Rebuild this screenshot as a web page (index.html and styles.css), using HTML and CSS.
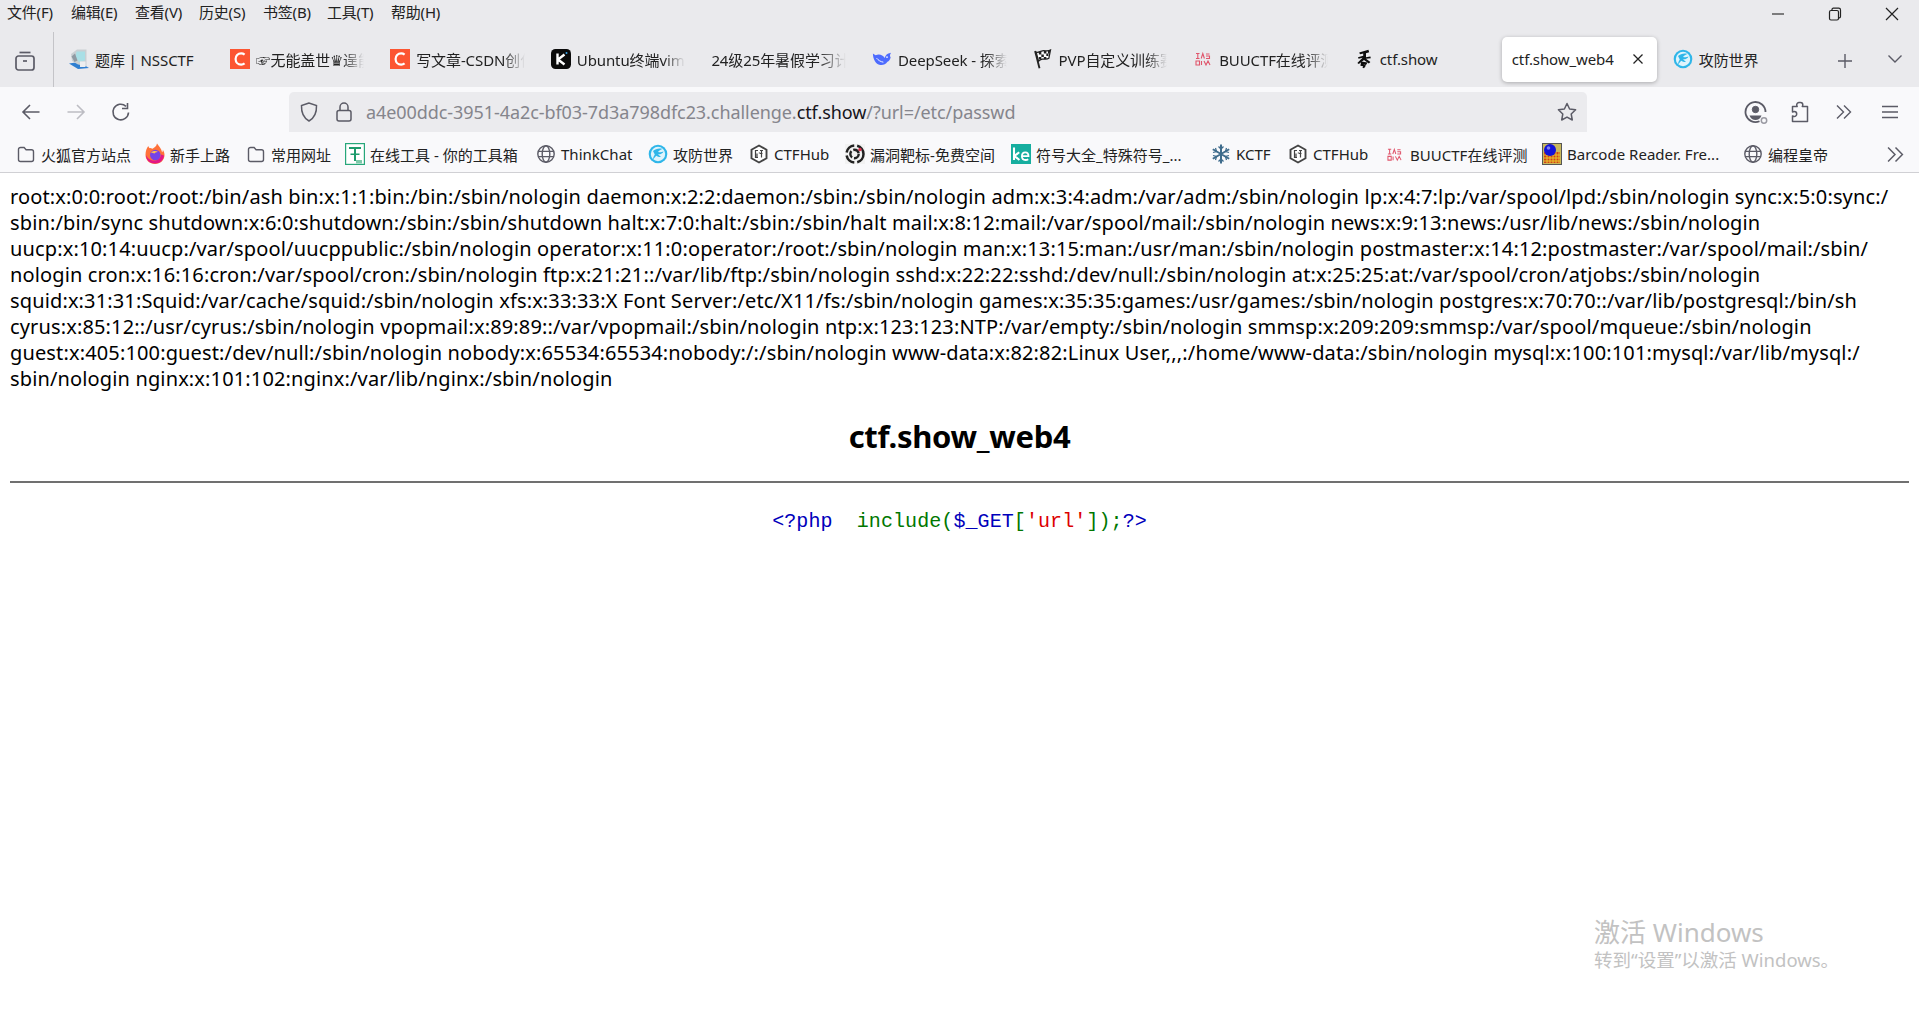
FILE: index.html
```html
<!DOCTYPE html>
<html lang="zh">
<head>
<meta charset="utf-8">
<title>ctf.show_web4</title>
<link rel="stylesheet" href="styles.css">
</head>
<body>
<svg class="defs" width="0" height="0" aria-hidden="true">
  <symbol id="i-folder" viewBox="0 0 20 20"><path d="M2.500 5.500a2 2 0 0 1 2-2h3.600l2 2.200h5.400a2 2 0 0 1 2 2v7.800a2 2 0 0 1-2 2h-11a2 2 0 0 1-2-2z" fill="none" stroke="#5b5b66" stroke-width="1.400"/></symbol>
  <symbol id="i-globe" viewBox="0 0 20 20"><g fill="none" stroke="#5b5b66" stroke-width="1.400"><circle cx="10" cy="10" r="8.200"/><ellipse cx="10" cy="10" rx="3.800" ry="8.200"/><path d="M2 7.400h16M2 12.600h16"/></g></symbol>
  <symbol id="i-csdn" viewBox="0 0 20 20"><rect width="20" height="20" fill="#fc5531"/><path d="M14.600 5.600A5.600 5.600 0 0 0 11.200 4.400C7.800 4.400 5.600 6.800 5.600 10s2.200 5.600 5.600 5.600a5.600 5.600 0 0 0 3.400-1.200" fill="none" stroke="#fff" stroke-width="2.200"/></symbol>
  <symbol id="i-k" viewBox="0 0 20 20"><rect width="20" height="20" rx="4.500" fill="#0b0b0b"/><path d="M6.500 4.500v11M13.500 5.500 7 10.500l6.500 5" fill="none" stroke="#fff" stroke-width="2.400"/><circle cx="15.500" cy="4" r="1" fill="#38a3e8"/></symbol>
  <symbol id="i-nss" viewBox="0 0 20 20"><path d="M0 14.500 9 20l11-1-10-6z" fill="#2f7fd1"/><path d="M2 5 8 .5h9.500V17L9 15.500 3 12z" fill="#c9cfd3"/><path d="M7.500 2.500h8.500v9l-6 1.500-3.500-5z" fill="#a9dfe6"/><path d="M11 12.500h5.500V18H11z" fill="#eceef0"/><path d="M2.500 7.500l3.500-3 2.500 7-3 1.500z" fill="#8f9aa3"/></symbol>
  <symbol id="i-deep" viewBox="0 0 22 20"><path d="M1 4c1 1 2 1 3 2 3-2 8-1 10 3 .5-2 1.500-4 4-5l3-1c-1.500 2-1.500 4-.5 5-.5 3-2 4.500-3.500 5-2 3-5 4-8 3.500C4 16 1 10 1 4z" fill="#4d6bfe"/><path d="M5 9c2 2.500 4.500 4 7.500 4.500" fill="none" stroke="#fff" stroke-width="1"/><circle cx="16.500" cy="8" r=".9" fill="#fff"/></symbol>
  <symbol id="i-flag" viewBox="0 0 22 24"><path d="M1.500 2.500 6.800 23" fill="none" stroke="#222" stroke-width="2.200"/><path d="M2.800 3.800c4 .9 6-1.800 9-1.800 3 0 5.200 1 8.200-.8l-2 10c-2.500 1.800-5 .7-7.800.9-2.800.2-3.500 2-4.500 2.600z" fill="#fff" stroke="#222" stroke-width="1.500"/><path d="M6 3.500h3v3H6zM12 2.500h3v3h-3zM17 2.500h2.500l-.5 3h-2zM9 6.500h3v3H9zM15 5.500h2.500v3H15zM6 9.500h3v3H6zM12 9.500h3v2.500h-3z" fill="#222"/></symbol>
  <symbol id="i-buu" viewBox="0 0 16 16"><g fill="none" stroke="#e0566c" stroke-width="1.100"><path d="M1 2.500h3.500M2.800 2.500v5M1 7.500h3.500M6.200 7.500l1.600-5 1.600 5M11 3h3.500M11 5h3.500v2.500H11M1 10h3.500v4H1zM6.500 10v4M9 10l2 4 2-4 2 4"/></g></symbol>
  <symbol id="i-xiu" viewBox="0 0 20 24"><path d="M15.500 .5 4 4l1 2 4-.8V8L2.500 9.800l.7 1.800 5-1.200-6.500 6.500 1.800 1.200 6.500-5 6 4.500 2-2-5.500-3.800 6-.8-.5-2-5.500.8V4.800l4-1.300z" fill="#0d0d0d"/><path d="M6.500 15l8 1.500-2 3-3.500-.500 3.500 1.200-2.500 3.300-2-.8 1-1.700-3.500-.500z" fill="#0d0d0d"/></symbol>
  <symbol id="i-adw" viewBox="0 0 20 20"><circle cx="10" cy="10" r="9.300" fill="#2fb6e9"/><circle cx="10" cy="10" r="7.200" fill="#dff4fc"/><path d="M5 7c2.500-2 6-3 9.500-2-2 .8-3.500 1.500-4.500 3 2 .2 3.500.5 5.500-.5-.8 2-3 3-5.500 2.800L13 13c-1.500.3-3.200 0-4.800-1.200L5 15.500c.2-2 .8-3.500 1.800-5z" fill="#2fb6e9"/></symbol>
  <symbol id="i-ff" viewBox="0 0 20 22"><path d="M10 21c5.500 0 9.500-4 9.500-9 0-2-.6-3.800-1.700-5.300.2 1.300-.2 2-.7 2.500C16.500 5.500 13.800 3.500 12 .5c-.6 3-2.500 3.800-4.500 5.200C6 5.200 5.200 5 4.500 5.200 3.800 4.500 3.500 3.700 3.300 3 1.700 5.200.5 8 .5 12c0 5 4 9 9.500 9z" fill="#ff7139"/><path d="M10 20.500c-5 0-9-3.500-9-8.500 2 5 7.500 6.500 11 5 2.500-1 4-3.500 4-5.500l3 1c-.5 4.500-4 8-9 8z" fill="#e31587"/><circle cx="10.300" cy="12" r="5.300" fill="#7542e5"/><path d="M6 9.500c1.500-1.500 5-2 7-.5-2-.2-3 .8-3.500 1.500z" fill="#ffbd4f"/></symbol>
  <symbol id="i-tool" viewBox="0 0 20 22"><rect x=".6" y=".6" width="18.800" height="20.800" fill="#fff" stroke="#27a77a" stroke-width="1.200"/><path d="M4 4h12v2H4zM9 6h2v12H9zM5.500 10.500h9v1.600h-9z" fill="#1d9b6c"/><path d="M11 17h6v3.500h-6z" fill="#7ec9aa"/></symbol>
  <symbol id="i-hub" viewBox="0 0 20 20"><path d="M10 1.500 17.500 5.800v8.400L10 18.500 2.500 14.200V5.800z" fill="#fff" stroke="#444" stroke-width="1.900"/><path d="M9 6.500H6.500v7H9M8 9.500v4M11 6.500h3M12.500 6.500v7M11 9.500h2.500M9.800 9h1.500" fill="none" stroke="#444" stroke-width="1.200"/></symbol>
  <symbol id="i-vuln" viewBox="0 0 20 20"><rect width="20" height="20" fill="#f2f2f2"/><circle cx="10" cy="10" r="8.500" fill="none" stroke="#222" stroke-width="2.500" stroke-dasharray="11 3"/><circle cx="9.500" cy="10" r="4.200" fill="none" stroke="#222" stroke-width="2.400" stroke-dasharray="7 2"/><circle cx="15" cy="5.500" r="1.700" fill="#d8344f"/></symbol>
  <symbol id="i-ke" viewBox="0 0 20 20"><rect width="20" height="20" fill="#16ae9f"/><path d="M3 3.500v12.500M8.200 8.200 3.500 12l4.900 4" fill="none" stroke="#fff" stroke-width="2.100"/><path d="M11 12.200h6.500c0-2.300-1.200-3.800-3.200-3.800s-3.400 1.600-3.400 3.900c0 2.500 1.500 3.700 3.600 3.700 1 0 2-.2 2.700-.7" fill="none" stroke="#fff" stroke-width="1.800"/></symbol>
  <symbol id="i-snow" viewBox="0 0 20 20"><g fill="none" stroke="#3f6c8c" stroke-width="2"><path d="M10 .5v19M1.800 5.250l16.400 9.500M1.800 14.750l16.400-9.500"/><path stroke-width="1.300" d="M7.500 2.500 10 5l2.500-2.500M7.500 17.500 10 15l2.500 2.500M2 8.500 5.500 7.500 4.500 4M18 8.500 14.500 7.500 15.500 4M2 11.500l3.500 1L4.500 16M18 11.500l-3.500 1 1 3.500"/></g></symbol>
  <symbol id="i-bar" viewBox="0 0 20 22"><rect x=".5" y=".5" width="19" height="21" fill="#c9b85c" stroke="#555"/><path d="M2 9h16v11H2z" fill="#cf3f1c"/><path d="M2 12h16M2 15h16M2 18h16M5 9v11M8 9v11M11 9v11M14 9v11M17 9v11" stroke="#e7c82a" stroke-width="1"/><circle cx="8" cy="7" r="6" fill="#1212d8"/><circle cx="6.500" cy="5" r="1.800" fill="#7d7df0"/></symbol>
</svg>

<header class="chrome">
  <div class="menubar">
    <nav class="menus">
      <span class="menu">文件(F)</span><span class="menu">编辑(E)</span><span class="menu">查看(V)</span><span class="menu">历史(S)</span><span class="menu">书签(B)</span><span class="menu">工具(T)</span><span class="menu">帮助(H)</span>
    </nav>
    <div class="winctl">
      <svg class="winbtn" viewBox="0 0 14 14"><path d="M1 7h12" stroke="#222" stroke-width="1.100"/></svg>
      <svg class="winbtn" viewBox="0 0 14 14"><g fill="none" stroke="#222" stroke-width="1.200"><rect x="1.500" y="3.500" width="9" height="9.500" rx="1.500"/><path d="M4 3.500V2.500a1.300 1.300 0 0 1 1.300-1.300h5.400a1.800 1.800 0 0 1 1.800 1.800v6.500a1.300 1.300 0 0 1-1.300 1.300h-1"/></g></svg>
      <svg class="winbtn" viewBox="0 0 14 14"><path d="M1 1l12 12M13 1 1 13" stroke="#222" stroke-width="1.200"/></svg>
    </div>
  </div>

  <div class="tabbar">
    <div class="viewslot">
      <svg class="view" viewBox="0 0 20 20"><g fill="none" stroke="#5b5b66" stroke-width="1.700"><path d="M4.500 1.500h11"/><rect x="1" y="5" width="18" height="14" rx="2.500"/><path d="M8 10h4"/></g></svg>
    </div>
    <div class="tabs">
      <div class="tab"><svg class="fav"><use href="#i-nss"/></svg><span class="tablabel">题库 | NSSCTF</span></div>
      <div class="tab"><svg class="fav"><use href="#i-csdn"/></svg><span class="tablabel fade">☞无能盖世♛逞能</span></div>
      <div class="tab"><svg class="fav"><use href="#i-csdn"/></svg><span class="tablabel fade">写文章-CSDN创作</span></div>
      <div class="tab"><svg class="fav"><use href="#i-k"/></svg><span class="tablabel fade">Ubuntu终端vim</span></div>
      <div class="tab"><span class="tablabel fade">24级25年暑假学习计划</span></div>
      <div class="tab"><svg class="fav"><use href="#i-deep"/></svg><span class="tablabel fade">DeepSeek - 探索</span></div>
      <div class="tab"><svg class="fav"><use href="#i-flag"/></svg><span class="tablabel fade">PVP自定义训练赛</span></div>
      <div class="tab"><svg class="fav small"><use href="#i-buu"/></svg><span class="tablabel fade">BUUCTF在线评测</span></div>
      <div class="tab"><svg class="fav tall"><use href="#i-xiu"/></svg><span class="tablabel">ctf.show</span></div>
      <div class="tab active"><span class="tablabel">ctf.show_web4</span><svg class="tabx" viewBox="0 0 12 12"><path d="M1.500 1.500l9 9M10.500 1.500l-9 9" stroke="#222" stroke-width="1.300"/></svg></div>
      <div class="tab"><svg class="fav"><use href="#i-adw"/></svg><span class="tablabel">攻防世界</span></div>
    </div>
    <svg class="newtab" viewBox="0 0 16 16"><path d="M8 1v14M1 8h14" stroke="#5b5b66" stroke-width="1.400"/></svg>
    <svg class="tablist" viewBox="0 0 16 16"><path d="M1.500 4.500 8 11l6.500-6.500" fill="none" stroke="#5b5b66" stroke-width="1.400"/></svg>
  </div>

  <div class="navbar">
    <div class="navbtns">
      <svg class="navbtn" viewBox="0 0 20 20"><path d="M18.500 10H2M9 3l-7 7 7 7" fill="none" stroke="#5b5b66" stroke-width="1.600"/></svg>
      <svg class="navbtn" viewBox="0 0 20 20"><path d="M1.500 10H18M11 3l7 7-7 7" fill="none" stroke="#bdbdc3" stroke-width="1.600"/></svg>
      <svg class="navbtn" viewBox="0 0 20 20"><path d="M17.500 10.500A7.800 7.800 0 1 1 15 4.300M16.500 1v5.500H11" fill="none" stroke="#5b5b66" stroke-width="1.600"/></svg>
    </div>
    <div class="urlbar">
      <svg class="shield" viewBox="0 0 18 20"><path d="M9 1 1.500 3.500c-.3 7 1.800 12.300 7.500 15.500 5.700-3.200 7.800-8.500 7.500-15.500z" fill="none" stroke="#5b5b66" stroke-width="1.500"/></svg>
      <svg class="lock" viewBox="0 0 16 20"><g fill="none" stroke="#5b5b66" stroke-width="1.500"><rect x="1" y="8.500" width="14" height="10.500" rx="2"/><path d="M4 8.500V5a4 4 0 0 1 8 0v3.500"/></g></svg>
      <span class="url">a4e00ddc-3951-4a2c-bf03-7d3a798dfc23.challenge.<b class="domain">ctf.show</b>/?url=/etc/passwd</span>
      <svg class="star" viewBox="0 0 20 20"><path d="M10 1.500l2.600 5.500 6 .8-4.400 4.200 1.100 6L10 15.100 4.700 18l1.100-6L1.400 7.800l6-.8z" fill="none" stroke="#5b5b66" stroke-width="1.500" stroke-linejoin="round"/></svg>
    </div>
    <div class="tools">
      <svg class="tool acct" viewBox="0 0 24 24"><g fill="none" stroke="#5b5b66"><path stroke-width="1.800" d="M15.500 21.200A10 10 0 1 1 21.500 12"/><circle cx="11.500" cy="9.500" r="3.200" fill="#5b5b66"/><path fill="#5b5b66" stroke-width="0" d="M5.500 15.500h12c-1 3-3.500 4.500-6 4.500s-5-1.500-6-4.500z"/><circle cx="20" cy="20.500" r="2.700" stroke="#9a9aa2" stroke-width="1.500"/></g></svg>
      <svg class="tool ext" viewBox="0 0 18 22"><path d="M8 1.500a2.300 2.300 0 0 0-2.300 2.300c0 .7.200 1.200.5 1.700H1.500V11c.5-.3 1-.5 1.700-.5a2.500 2.500 0 0 1 0 5c-.7 0-1.200-.2-1.700-.5V20.500h15V5.500h-5.200c.3-.5.5-1 .5-1.700A2.300 2.300 0 0 0 9.500 1.500z" fill="none" stroke="#5b5b66" stroke-width="1.500" stroke-linejoin="round"/></svg>
      <svg class="tool chev" viewBox="0 0 16 16"><path d="M1 1.500 7.500 8 1 14.500M8 1.500 14.500 8 8 14.500" fill="none" stroke="#5b5b66" stroke-width="1.400"/></svg>
      <svg class="tool burger" viewBox="0 0 16 16"><path d="M0 2.500h16M0 8h16M0 13.500h16" stroke="#5b5b66" stroke-width="1.500"/></svg>
    </div>
  </div>

  <div class="bookmarks">
    <div class="bm"><svg class="bmi"><use href="#i-folder"/></svg><span class="bml">火狐官方站点</span></div>
    <div class="bm"><svg class="bmi"><use href="#i-ff"/></svg><span class="bml">新手上路</span></div>
    <div class="bm"><svg class="bmi"><use href="#i-folder"/></svg><span class="bml">常用网址</span></div>
    <div class="bm"><svg class="bmi"><use href="#i-tool"/></svg><span class="bml">在线工具 - 你的工具箱</span></div>
    <div class="bm"><svg class="bmi"><use href="#i-globe"/></svg><span class="bml">ThinkChat</span></div>
    <div class="bm"><svg class="bmi"><use href="#i-adw"/></svg><span class="bml">攻防世界</span></div>
    <div class="bm"><svg class="bmi"><use href="#i-hub"/></svg><span class="bml">CTFHub</span></div>
    <div class="bm"><svg class="bmi"><use href="#i-vuln"/></svg><span class="bml">漏洞靶标-免费空间</span></div>
    <div class="bm"><svg class="bmi"><use href="#i-ke"/></svg><span class="bml">符号大全_特殊符号_...</span></div>
    <div class="bm"><svg class="bmi"><use href="#i-snow"/></svg><span class="bml">KCTF</span></div>
    <div class="bm"><svg class="bmi"><use href="#i-hub"/></svg><span class="bml">CTFHub</span></div>
    <div class="bm"><svg class="bmi small"><use href="#i-buu"/></svg><span class="bml">BUUCTF在线评测</span></div>
    <div class="bm"><svg class="bmi"><use href="#i-bar"/></svg><span class="bml">Barcode Reader. Fre...</span></div>
    <div class="bm"><svg class="bmi"><use href="#i-globe"/></svg><span class="bml">编程皇帝</span></div>
    <svg class="bmmore" viewBox="0 0 16 16"><path d="M1 1.500 7.500 8 1 14.500M8 1.500 14.500 8 8 14.500" fill="none" stroke="#5b5b66" stroke-width="1.400"/></svg>
  </div>
</header>

<main class="page">
  <p class="passwd">root:x:0:0:root:/root:/bin/ash bin:x:1:1:bin:/bin:/sbin/nologin daemon:x:2:2:daemon:/sbin:/sbin/nologin adm:x:3:4:adm:/var/adm:/sbin/nologin lp:x:4:7:lp:/var/spool/lpd:/sbin/nologin sync:x:5:0:sync:/<br>sbin:/bin/sync shutdown:x:6:0:shutdown:/sbin:/sbin/shutdown halt:x:7:0:halt:/sbin:/sbin/halt mail:x:8:12:mail:/var/spool/mail:/sbin/nologin news:x:9:13:news:/usr/lib/news:/sbin/nologin<br>uucp:x:10:14:uucp:/var/spool/uucppublic:/sbin/nologin operator:x:11:0:operator:/root:/sbin/nologin man:x:13:15:man:/usr/man:/sbin/nologin postmaster:x:14:12:postmaster:/var/spool/mail:/sbin/<br>nologin cron:x:16:16:cron:/var/spool/cron:/sbin/nologin ftp:x:21:21::/var/lib/ftp:/sbin/nologin sshd:x:22:22:sshd:/dev/null:/sbin/nologin at:x:25:25:at:/var/spool/cron/atjobs:/sbin/nologin<br>squid:x:31:31:Squid:/var/cache/squid:/sbin/nologin xfs:x:33:33:X Font Server:/etc/X11/fs:/sbin/nologin games:x:35:35:games:/usr/games:/sbin/nologin postgres:x:70:70::/var/lib/postgresql:/bin/sh<br>cyrus:x:85:12::/usr/cyrus:/sbin/nologin vpopmail:x:89:89::/var/vpopmail:/sbin/nologin ntp:x:123:123:NTP:/var/empty:/sbin/nologin smmsp:x:209:209:smmsp:/var/spool/mqueue:/sbin/nologin<br>guest:x:405:100:guest:/dev/null:/sbin/nologin nobody:x:65534:65534:nobody:/:/sbin/nologin www-data:x:82:82:Linux User,,,:/home/www-data:/sbin/nologin mysql:x:100:101:mysql:/var/lib/mysql:/<br>sbin/nologin nginx:x:101:102:nginx:/var/lib/nginx:/sbin/nologin</p>
  <h2 class="title">ctf.show_web4</h2>
  <hr class="rule">
  <code class="php"><span class="k">&lt;?php</span>&nbsp;&nbsp;<span class="g">include(</span><span class="k">$_GET</span><span class="g">[</span><span class="r">'url'</span><span class="g">]);</span><span class="k">?&gt;</span></code>
</main>

<aside class="activate">
  <div class="act1">激活 Windows</div>
  <div class="act2">转到“设置”以激活 Windows。</div>
</aside>
</body>
</html>
```

FILE: styles.css
```css
* { box-sizing: border-box; }
html, body { margin: 0; padding: 0; }
body {
  width: 1919px;
  height: 1013px;
  overflow: hidden;
  background: #fff;
  color: #000;
  font-family: "Noto Sans", "Noto Sans CJK SC", sans-serif;
  position: relative;
}
.defs { position: absolute; }

.chrome { display: flex; flex-direction: column; }

.menubar {
  height: 28px;
  background: #eaeaed;
  display: flex;
  justify-content: space-between;
  align-items: flex-start;
  padding-left: 7px;
}
.menus { display: flex; font-size: 15px; line-height: 24px; color: #222; }
.menu { width: 64px; white-space: nowrap; letter-spacing: -0.2px; }
.winctl { display: flex; gap: 43px; padding: 7px 20px 0 0; }
.winbtn { width: 14px; height: 14px; display: block; }

.tabbar {
  height: 59px;
  background: #eaeaed;
  display: flex;
  align-items: flex-start;
}
.viewslot {
  width: 54px;
  height: 55px;
  margin-top: 4px;
  border-right: 1px solid #c4c4c8;
  display: flex;
  align-items: center;
  padding: 2px 0 0 15px;
  flex: none;
}
.view { width: 20px; height: 20px; }
.tabs {
  display: grid;
  grid-template-columns: repeat(8, 160.6px) 158px 161px 160px;
  padding-top: 9px;
  margin-left: 2px;
  flex: none;
}
.tab {
  height: 45px;
  display: flex;
  align-items: center;
  gap: 6px;
  padding: 0 13px 1px;
  overflow: hidden;
  font-size: 15px;
  color: #222;
}
.tab.active {
  margin: 0 3px;
  padding: 0 13px 1px 10px;
  background: #fff;
  border-radius: 5px;
  box-shadow: 0 1px 4px rgba(0,0,0,.28);
  justify-content: space-between;
  overflow: visible;
}
.fav { width: 20px; height: 20px; flex: none; }
.fav.small { width: 16px; height: 16px; margin: 0 2px; }
.fav.tall { width: 16px; height: 22px; margin: 0 2px; }
.tablabel { white-space: nowrap; overflow: hidden; letter-spacing: -0.1px; flex: 1; min-width: 0; }
.tab.active .tablabel { flex: none; }
.fade {
  -webkit-mask-image: linear-gradient(to right, #000 80%, transparent 100%);
  mask-image: linear-gradient(to right, #000 80%, transparent 100%);
}
.tabx { width: 12px; height: 12px; flex: none; }
.newtab { width: 16px; height: 16px; margin: 25px 0 0 17px; flex: none; }
.tablist { width: 16px; height: 16px; margin: 23px 0 0 34px; flex: none; }

.navbar {
  height: 45px;
  background: #f9f9fb;
  display: flex;
  align-items: flex-end;
}
.navbtns { display: flex; gap: 25px; padding: 0 0 10px 21px; width: 289px; flex: none; }
.navbtn { width: 20px; height: 20px; flex: none; }
.urlbar {
  width: 1298px;
  height: 40px;
  background: #ebebee;
  border-radius: 5px 5px 0 0;
  display: flex;
  align-items: center;
  padding: 0 10px 0 11px;
  flex: none;
}
.shield { width: 18px; height: 20px; flex: none; }
.lock { width: 16px; height: 20px; margin-left: 18px; flex: none; }
.url { margin-left: 14px; font-size: 18px; line-height: 24px; color: #85858c; flex: 1; white-space: nowrap; letter-spacing: -0.07px; }
.domain { font-weight: 400; color: #15141a; }
.star { width: 20px; height: 20px; flex: none; }
.tools { display: flex; align-items: center; flex: none; height: 40px; }
.tool { display: block; flex: none; }
.acct { width: 24px; height: 24px; margin-left: 157px; }
.ext { width: 18px; height: 22px; margin-left: 23px; }
.chev { width: 16px; height: 16px; margin-left: 27px; }
.burger { width: 16px; height: 16px; margin-left: 30px; }

.bookmarks {
  height: 41px;
  background: #f9f9fb;
  border-bottom: 1px solid #d0d0d4;
  display: grid;
  grid-template-columns: 129px 101px 99px 191px 112px 101px 96px 166px 200px 77px 99px 155px 201px 144px 17px;
  align-items: center;
  padding: 4px 0 0 16px;
}
.bm { display: flex; align-items: center; gap: 5px; font-size: 15px; color: #222; white-space: nowrap; overflow: hidden; height: 24px; }
.bmi { width: 20px; height: 22px; flex: none; }
.bmi.small { width: 15px; height: 15px; margin-right: 3px; }
.bml { letter-spacing: 0.02px; }
.bmmore { width: 17px; height: 17px; }

.page { padding: 11px 10px 0; }
.passwd {
  margin: 0;
  font-size: 20px;
  line-height: 26px;
  white-space: nowrap;
  letter-spacing: 0.14px;
}
.title {
  margin: 24px 0 0;
  text-align: center;
  font-size: 31px;
  line-height: 40px;
  font-weight: 700;
  letter-spacing: -0.3px;
}
.rule {
  margin: 25px 0 0;
  border: 0;
  border-top: 2px solid #707070;
}
.php {
  display: block;
  margin-top: 27px;
  text-align: center;
  font-family: "Liberation Mono", monospace;
  font-size: 20px;
  line-height: 24px;
  letter-spacing: 0.08px;
}
.k { color: #0000bb; }
.g { color: #007700; }
.r { color: #dd0000; }

.activate { position: absolute; left: 1594px; top: 916px; color: #c2c2c2; }
.act1 { font-size: 26px; line-height: 32px; }
.act2 { font-size: 18.500px; line-height: 23px; }
```
